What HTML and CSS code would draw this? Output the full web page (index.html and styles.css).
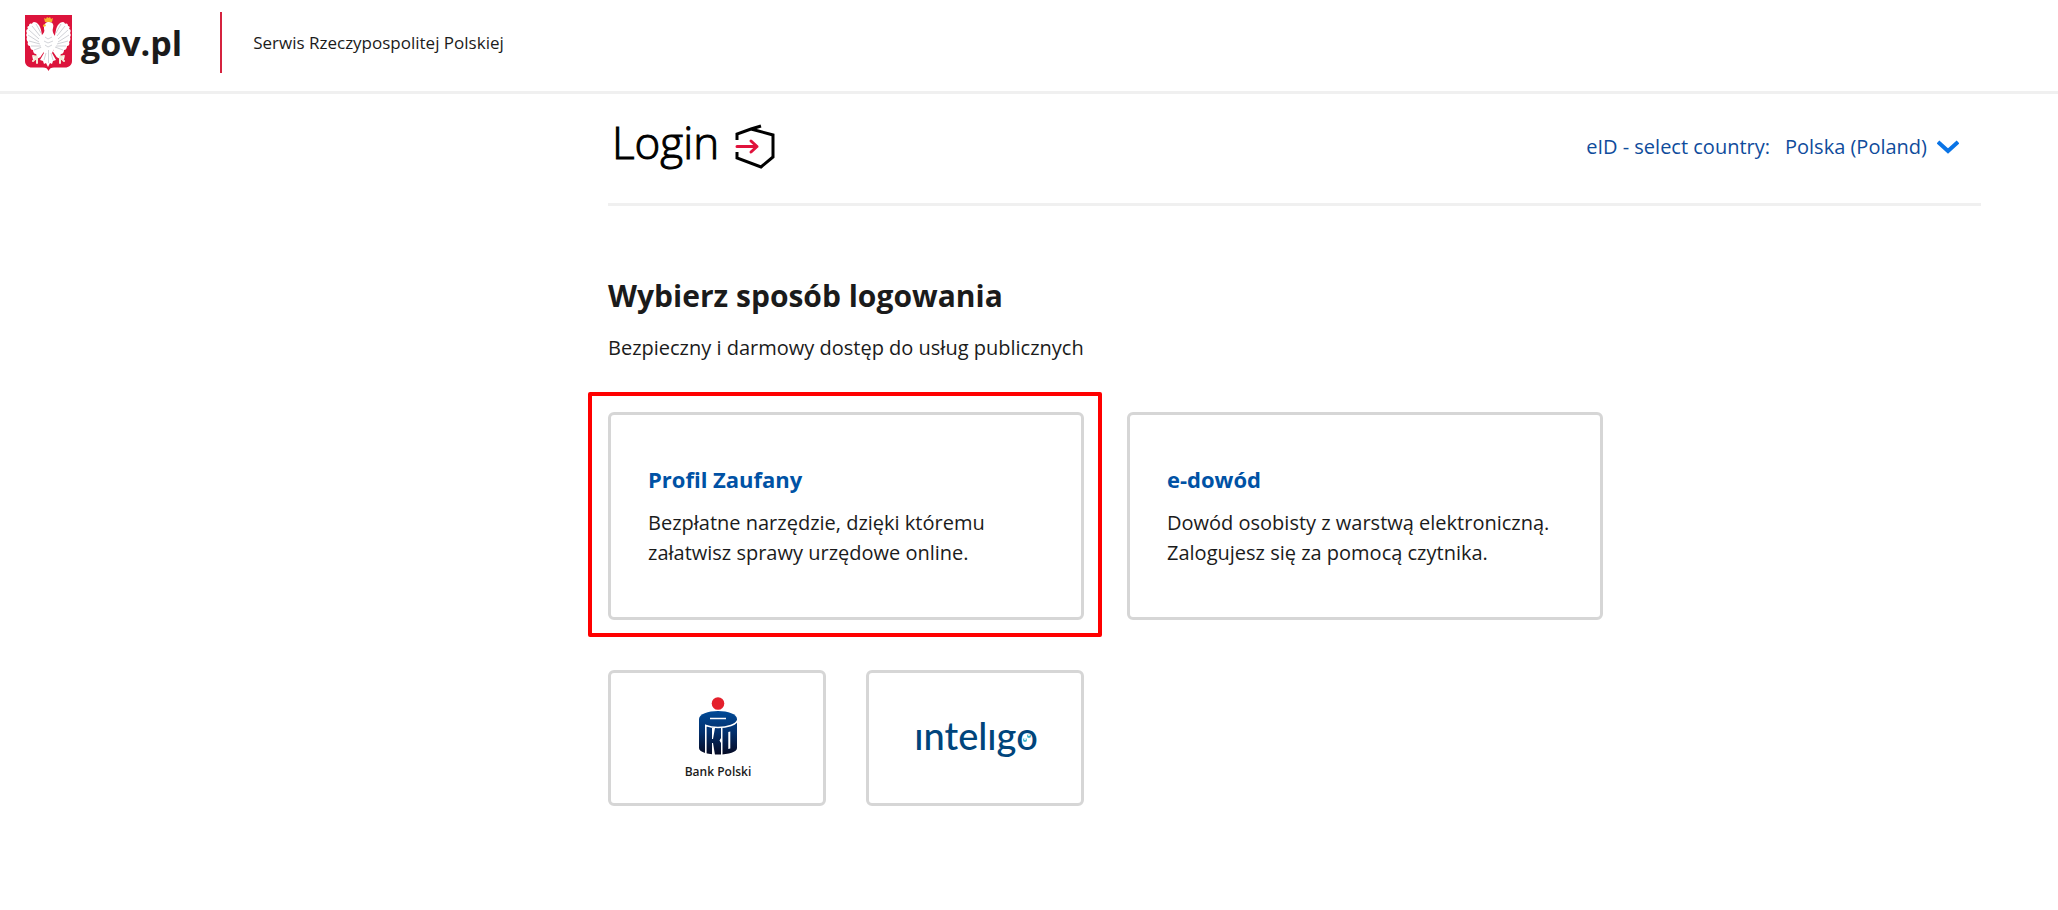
FILE: index.html
```html
<!DOCTYPE html>
<html lang="pl">

<head>
    <meta charset="UTF-8">
    <meta name="viewport" content="width=device-width, initial-scale=1.0">
    <title>Login - gov.pl</title>
    <link rel="stylesheet" href="styles.css">
</head>

<body>

    <header class="top-bar">
        <a class="brand" href="#">
            <svg class="emblem" viewBox="0 0 47 56" aria-hidden="true">
                <path fill="#dc143c" d="M0 0h47v46c0 4-3 6.500-7 6.500H29c-3 0-4.500 1-5.500 3.500-1-2.500-2.500-3.500-5.500-3.500H7c-4 0-7-2.500-7-6.500z"/>
                <!-- wings -->
                <g id="wing">
                    <path fill="#fff" d="M20 27c-3-3-3-8-4-12-1-5-4-8-7-8-1 0-2 1-2 2-2-1-3 0-3 2-2 0-2 2-1 3-2 0-2 3-1 4-1 1-1 3 0 4-1 2 0 4 1 5-1 2 0 4 2 4 0 2 1 4 3 4 0 2 1 4 3 4 1 2 3 2 4 0l5-6z"/>
                    <path fill="none" stroke="#c3c5cc" stroke-width=".8" d="M7 11l8 10M4 15l10 9M3 20l11 7M4 26l11 3M6 31l10 0M9 35l8-3M11 9l5 9"/>
                </g>
                <use href="#wing" transform="matrix(-1 0 0 1 47 0)"/>
                <!-- head, body and tail -->
                <path fill="#fff" d="M19 12c0-3 2-5 5-5 4 0 5 3 4 6s0 5 2 8v11l-3 6 4 7-3 1-1 3-2-1-2 4-2-4-2 1-1-3-3-1 4-7-3-6V21c3-3 4-5 3-7z"/>
                <path fill="none" stroke="#bfc1c8" stroke-width=".7" d="M20 22l3 2 4-2M19 26l4 2 5-2M20 30l3 2 4-2M23.500 35v13M21 38l-2 7M26 38l2 7"/>
                <!-- legs -->
                <path fill="none" stroke="#fff" stroke-width="3.500" d="M18 35l-4 6-6 3M29 35l4 6 6 3"/>
                <path fill="none" stroke="#f4ead6" stroke-width="2" stroke-linecap="round" d="M12 42l-4-1M12 42l-4 4M12 43l0 5M35 42l4-1M35 42l4 4M35 43l0 5"/>
                <path fill="#f7b52c" d="M20 7l-1-4 2 1 1-2 1.500 1L25 2l1 2 2-1-1 4zM20 9l-2 1 0 2 3-1z"/>
            </svg>
            <span class="brand-name">gov.pl</span>
        </a>
        <span class="brand-text">Serwis Rzeczypospolitej Polskiej</span>
    </header>

    <main class="content">
        <div class="login-bar">
            <div class="login-logo">
                <span class="login-name">Login</span>
                <svg class="login-icon" viewBox="0 0 40 46" aria-hidden="true">
                    <path fill="none" stroke="#000" stroke-width="3" d="M26 2L16 5 2 10v6M16 5l22 6v22L26 43 2 34v-6"/>
                    <path fill="none" stroke="#e0123c" stroke-width="3" stroke-linecap="round" stroke-linejoin="round" d="M2 22.500h20M16 17l6 5.500-6 5.500"/>
                </svg>
            </div>
            <div class="country">
                <label for="country">eID - select country:</label>
                <select id="country" name="country">
                    <option>Polska (Poland)</option>
                </select>
                <svg class="chevron" viewBox="0 0 22 14" aria-hidden="true">
                    <path fill="none" stroke="#0a74e6" stroke-width="4" d="M1 2l10 9L21 2"/>
                </svg>
            </div>
        </div>

        <h1>Wybierz sposób logowania</h1>
        <p class="lead">Bezpieczny i darmowy dostęp do usług publicznych</p>

        <div class="methods">
            <a class="card highlighted" href="#">
                <h2>Profil Zaufany</h2>
                <p>Bezpłatne narzędzie, dzięki któremu załatwisz sprawy urzędowe online.</p>
            </a>
            <a class="card" href="#">
                <h2>e-dowód</h2>
                <p>Dowód osobisty z warstwą elektroniczną. Zalogujesz się za pomocą czytnika.</p>
            </a>
        </div>

        <div class="banks">
            <a class="bank" href="#">
                <svg class="pko" viewBox="0 0 38 58" aria-hidden="true">
                    <defs>
                        <linearGradient id="pkoBlue" x1="0" y1="0" x2="0" y2="1">
                            <stop offset="0" stop-color="#004a97"/>
                            <stop offset=".5" stop-color="#032f6b"/>
                            <stop offset="1" stop-color="#060b24"/>
                        </linearGradient>
                    </defs>
                    <circle cx="19" cy="6.500" r="6.300" fill="#e4202c"/>
                    <path fill="url(#pkoBlue)" d="M0 22c0-5 9-8 19-8s19 3 19 8v29c0 4-8 6.500-19 6.500S0 55 0 51z"/>
                    <!-- lid edge and coin slot -->
                    <path fill="none" stroke="#fff" stroke-width="1.600" d="M6.800 57V28.500c4 1.500 8 2 12.200 2 10 0 18-3 19.500-7"/>
                    <path stroke="#fff" stroke-width="1.500" d="M11 21.500h16"/>
                    <!-- gaps between the staves -->
                    <path fill="#fff" d="M13 31h3l-2 11h-1zM13 46h1l2 12h-3zM22 31h1.500v27H22v-12l-1.500-2.500L22 41zM29.300 35l2-.500v17l-2 .500z"/>
                </svg>
                <span class="pko-name">Bank Polski</span>
            </a>
            <a class="bank" href="#">
                <span class="inteligo">
                    ıntelıgo
                    <svg class="inteligo-eyes" viewBox="0 0 10 10" aria-hidden="true">
                        <circle cx="3" cy="7" r="2" fill="#3fb5c9"/>
                        <circle cx="7" cy="3" r="2" fill="#3fb5c9"/>
                        <circle cx="3" cy="6" r="1" fill="#fff"/>
                        <circle cx="7" cy="2" r="1" fill="#fff"/>
                    </svg>
                </span>
            </a>
        </div>
    </main>

</body>

</html>
```

FILE: styles.css
```css
* {
    box-sizing: border-box;
}

body {
    margin: 0;
    background-color: #fff;
    color: #1b1b1b;
    font-family: 'Open Sans', sans-serif;
    font-size: 20px;
    line-height: 30px;
}

a {
    color: inherit;
    text-decoration: none;
}

h1,
h2,
p {
    margin: 0;
}

.top-bar {
    display: flex;
    align-items: flex-start;
    padding: 12px 25px 18px;
    border-bottom: 3px solid #f0f0f0;
}

.brand {
    display: flex;
    align-items: center;
    gap: 9px;
    height: 61px;
    padding-right: 38px;
    border-right: 2px solid #d5233f;
}

.emblem {
    width: 47px;
    height: 56px;
}

.brand-name {
    font-size: 34px;
    font-weight: 700;
}

.brand-text {
    padding-left: 31px;
    font-size: 17px;
    line-height: 61px;
}

.content {
    padding: 0 77px 40px 608px;
}

.login-bar {
    display: flex;
    justify-content: space-between;
    align-items: center;
    height: 112px;
    margin-bottom: 70px;
    padding: 0 22px 4px 4px;
    border-bottom: 3px solid #f0f0f0;
}

.login-logo {
    display: flex;
    align-items: center;
    gap: 16px;
}

.login-name {
    padding-bottom: 10px;
    color: #000;
    font-size: 44px;
    font-weight: 300;
    line-height: 60px;
    -webkit-text-stroke: 1px #000;
}

.login-icon {
    width: 40px;
    height: 46px;
}

.country {
    display: flex;
    align-items: center;
    color: #0f4c9c;
}

.country select {
    appearance: none;
    margin: 0 10px 0 15px;
    padding: 0;
    border: none;
    background: none;
    color: inherit;
    font: inherit;
    cursor: pointer;
}

.chevron {
    width: 22px;
    height: 14px;
}

h1 {
    margin-bottom: 17px;
    font-size: 30px;
    line-height: 40px;
}

.lead {
    margin-bottom: 49px;
}

.methods {
    display: grid;
    grid-template-columns: repeat(2, 476px);
    gap: 43px;
    margin-bottom: 50px;
}

.card,
.bank {
    border: 3px solid #d6d6d6;
    border-radius: 6px;
}

.card {
    position: relative;
    padding: 49px 37px;
}

.card h2 {
    margin-bottom: 14px;
    color: #0052a5;
    font-size: 22px;
    line-height: 30px;
}

.highlighted::after {
    content: "";
    position: absolute;
    inset: -23px -21px -20px -23px;
    border: 4px solid #f00;
    border-radius: 2px;
}

.banks {
    display: flex;
    gap: 40px;
}

.bank {
    display: flex;
    flex-direction: column;
    align-items: center;
    justify-content: center;
    width: 218px;
    height: 136px;
    padding: 2px 0 0 2px;
}

.pko {
    width: 38px;
    height: 58px;
}

.pko-name {
    margin-top: 7px;
    font-size: 12px;
    font-weight: 600;
    line-height: 20px;
}

.inteligo {
    position: relative;
    padding-bottom: 8px;
    color: #00457c;
    font-family: Lato, sans-serif;
    font-size: 38px;
    font-weight: 500;
    line-height: 40px;
}

.inteligo-eyes {
    position: absolute;
    right: 6px;
    bottom: 20px;
    width: 10px;
    height: 10px;
}
```
